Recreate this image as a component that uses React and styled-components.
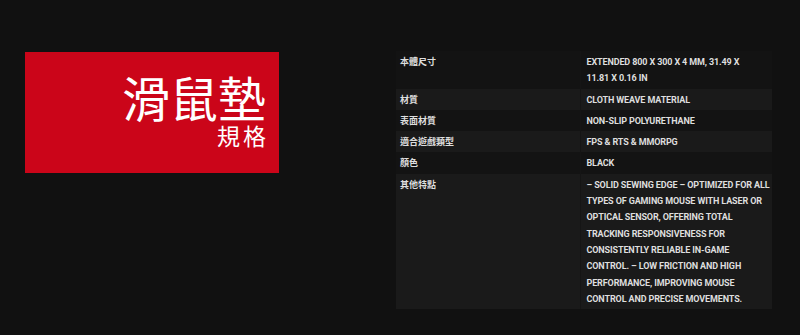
import React from 'react'
import styled, { createGlobalStyle } from 'styled-components'

const GlobalStyle = createGlobalStyle`
  html, body {
    margin: 0;
    padding: 0;
    background: #111111;
  }
`

// value lines are kept as in the source layout so the wrap stays the same
const specs = [
  { label: '本體尺寸', value: ['EXTENDED 800 X 300 X 4 MM, 31.49 X', '11.81 X 0.16 IN'] },
  { label: '材質', value: ['CLOTH WEAVE MATERIAL'] },
  { label: '表面材質', value: ['NON-SLIP POLYURETHANE'] },
  { label: '適合遊戲類型', value: ['FPS & RTS & MMORPG'] },
  { label: '顏色', value: ['BLACK'] },
  {
    label: '其他特點',
    value: [
      '– SOLID SEWING EDGE – OPTIMIZED FOR ALL',
      'TYPES OF GAMING MOUSE WITH LASER OR',
      'OPTICAL SENSOR, OFFERING TOTAL',
      'TRACKING RESPONSIVENESS FOR',
      'CONSISTENTLY RELIABLE IN-GAME',
      'CONTROL. – LOW FRICTION AND HIGH',
      'PERFORMANCE, IMPROVING MOUSE',
      'CONTROL AND PRECISE MOVEMENTS.',
    ],
  },
]

const App = () => {
  return (
    <Page>
      <GlobalStyle />
      <Banner>
        <Title>滑鼠墊</Title>
        <Subtitle>規格</Subtitle>
      </Banner>

      <SpecTable>
        <tbody>
          {specs.map((row, i) => (
            <Row key={row.label} $striped={i % 2 === 1}>
              <Label>{row.label}</Label>
              <Value>
                {row.value.map(line => (
                  <Line key={line}>{line}</Line>
                ))}
              </Value>
            </Row>
          ))}
        </tbody>
      </SpecTable>
    </Page>
  )
}

const Page = styled.div`
  display: flex;
  align-items: flex-start;
  gap: 117px;
  width: 800px;
  height: 335px;
  box-sizing: border-box;
  padding: 51px 0 0 25px;
  background: #111111;
`

const Banner = styled.div`
  flex: 0 0 254px;
  height: 121px;
  margin-top: 1px;
  box-sizing: border-box;
  padding: 0 13px 6px 0;
  background: #cb0519;
  display: flex;
  flex-direction: column;
  align-items: flex-end;
  justify-content: center;
  color: #ffffff;
  font-family: 'Noto Sans CJK TC', 'Noto Sans', sans-serif;
`

const Title = styled.div`
  font-size: 48px;
  line-height: 50px;
  font-weight: 400;
  margin-bottom: 2px;
`

const Subtitle = styled.div`
  font-size: 23px;
  line-height: 25px;
  font-weight: 400;
  letter-spacing: 3px;
  margin-right: -3px;
`

const SpecTable = styled.table`
  width: 376px;
  border-collapse: collapse;
  table-layout: fixed;
  font-size: 9px;
  font-weight: 700;
  line-height: 16.3px;
  color: #dedede;
`

const Row = styled.tr`
  background: ${p => (p.$striped ? '#1a1a1a' : '#131313')};
`

const Label = styled.td`
  width: 184px;
  box-sizing: border-box;
  padding: 3px 4px 2px;
  vertical-align: top;
  font-family: 'Noto Sans CJK TC', sans-serif;
  border-right: 1px solid #151515;
`

const Value = styled.td`
  padding: 3px 2px 2px 6px;
  vertical-align: top;
  font-family: Roboto, 'Liberation Sans', sans-serif;
  font-size: 9px;
  letter-spacing: -0.12px;
`

const Line = styled.span`
  display: block;
  white-space: nowrap;
`

export default App
